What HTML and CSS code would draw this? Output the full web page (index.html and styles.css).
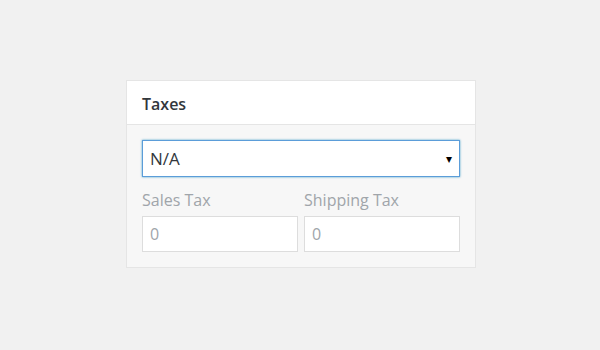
FILE: index.html
```html
<!DOCTYPE html>
<html lang="en">
<head>
    <meta charset="UTF-8">
    <title>Taxes</title>
    <link rel="stylesheet" href="styles.css">
</head>
<body>
    <div class="postbox">
        <h2 class="postbox-title">Taxes</h2>
        <div class="postbox-inside">
            <div class="select-box">
                <span class="select-value">N/A</span>
                <span class="select-arrow">&#9662;</span>
            </div>
            <div class="tax-fields">
                <div class="tax-field">
                    <label>Sales Tax</label>
                    <div class="text-input">0</div>
                </div>
                <div class="tax-field">
                    <label>Shipping Tax</label>
                    <div class="text-input">0</div>
                </div>
            </div>
        </div>
    </div>
</body>
</html>
```

FILE: styles.css
```css
body {
    margin: 0;
    background-color: #f1f1f1;
    font-family: 'Open Sans', sans-serif;
    color: #32373c;
}
.postbox {
    width: 348px;
    margin: 80px 0 0 126px;
    border: 1px solid #e5e5e5;
    box-shadow: 0 2px 0 -1px #e5e5e5;
    background-color: #f7f7f7;
}
.postbox-title {
    margin: 0;
    height: 43px;
    line-height: 46px;
    padding: 0 15px;
    font-size: 16px;
    font-weight: 600;
    background-color: #fff;
    border-bottom: 1px solid #e5e5e5;
    color: #32373c;
}
.postbox-inside {
    padding: 15px;
}
.select-box {
    display: flex;
    justify-content: space-between;
    align-items: center;
    height: 35px;
    padding: 0 7px;
    background-color: #fff;
    border: 1px solid #5b9dd9;
    box-shadow: 0 0 2px rgba(30, 140, 190, 0.8);
    font-size: 17px;
}
.select-arrow {
    font-size: 12px;
    color: #000;
}
.tax-fields {
    display: flex;
    gap: 6px;
    margin-top: 12px;
}
.tax-field {
    flex: 1;
}
.tax-field label {
    display: block;
    font-size: 16px;
    color: #a0a5aa;
    line-height: 22px;
    margin-bottom: 5px;
}
.text-input {
    height: 34px;
    line-height: 34px;
    padding: 0 7px;
    background-color: #fff;
    border: 1px solid #ddd;
    font-size: 16px;
    color: #a0a5aa;
}
```
